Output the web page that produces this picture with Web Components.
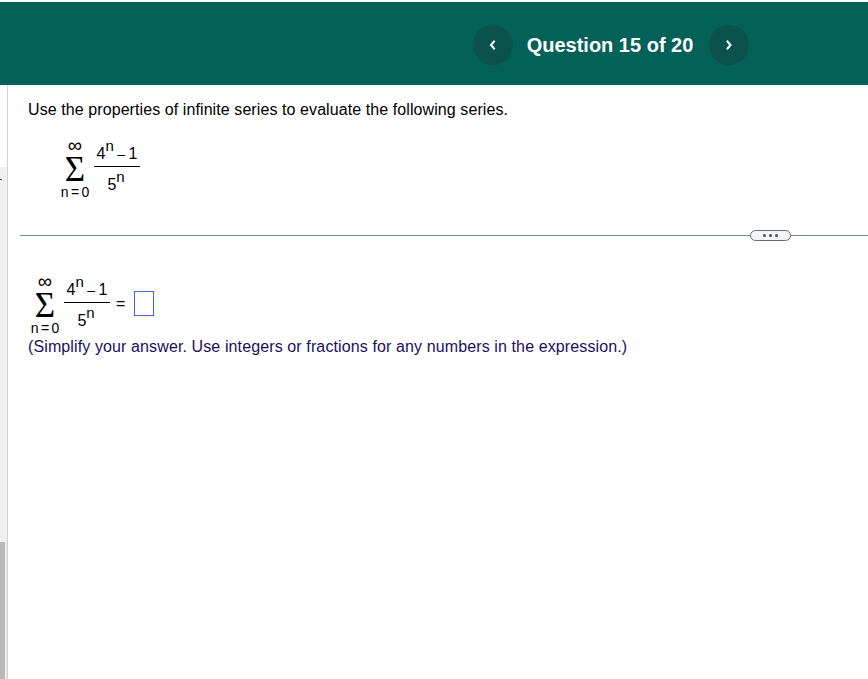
<!DOCTYPE html>
<html><head><meta charset="utf-8">
<style>
html,body{margin:0;padding:0;background:#fff;height:100%}
body{font-family:"Liberation Sans",Arial,sans-serif;color:#000;overflow:hidden}
</style></head><body>
<q-app>
  <q-header slot="header" label="Question 15 of 20"></q-header>
  <q-rail slot="rail"></q-rail>
  <q-content>
    <q-text style="--top:15px;--left:28px;letter-spacing:.085px">Use the properties of infinite series to evaluate the following series.</q-text>
    <q-sum style="--ml:52px;--mt:17px"></q-sum>
    <q-divider style="--mt:29px"></q-divider>
    <q-sum answer style="--ml:22px;--mt:32px"></q-sum>
    <q-text style="--top:0px;--left:28px;color:#1a1060;letter-spacing:.115px">(Simplify your answer. Use integers or fractions for any numbers in the expression.)</q-text>
  </q-content>
</q-app>
<script>
function def(name, html, init){
  customElements.define(name, class extends HTMLElement{
    constructor(){super();const r=this.attachShadow({mode:'open'});r.innerHTML=html;}
    connectedCallback(){ if(init) init(this); }
  });
}
def('q-app',`<style>
:host{display:grid;grid-template-columns:8px 1fr;grid-template-rows:85px 1fr;height:679px;width:868px}
.h{grid-column:1/3}
</style><div class="h"><slot name="header"></slot></div><slot name="rail"></slot><slot></slot>`);
const chev=d=>`<svg width="8" height="10" viewBox="0 0 8 10"><path d="${d}" fill="none" stroke="#fff" stroke-width="2" stroke-linecap="square"/></svg>`;
def('q-header',`<style>
:host{display:block;height:85px;box-sizing:border-box;padding-top:2px;background:#fff}
.bar{height:83px;background:#046158;display:flex;align-items:center;padding-left:473px;padding-top:3px;box-sizing:border-box}
button{all:unset;width:40px;height:40px;border-radius:50%;background:#0b524e;display:flex;align-items:center;justify-content:center}
.t{width:194px;padding-right:2px;text-align:center;color:#fff;font:bold 20px "Liberation Sans",Arial,sans-serif;white-space:nowrap}
</style><div class="bar"><button aria-label="Previous">${chev('M5 1.5 2 5l3 3.5')}</button><span class="t" id="t"></span><button aria-label="Next">${chev('M2.5 1.5 5.5 5l-3 3.5')}</button></div>`,
 el=>{el.shadowRoot.getElementById('t').textContent=el.getAttribute('label')});
def('q-rail',`<style>
:host{display:flex;flex-direction:column;width:8px;box-sizing:border-box;border-right:1px solid #d2d2da;height:594px}
.a{height:82px;background:#fff}.b{height:375px;box-sizing:border-box;padding-top:12px;background:#f0f0f0}.c{flex:1;background:#fff;display:flex}
.b i{display:block;width:2px;height:1px;background:#555}
.c i{display:block;width:5px;background:#bbb}.c b{flex:1;background:#ececf0}
</style><div class="a"></div><div class="b"><i></i></div><div class="c"><i></i><b></b></div>`);
def('q-content',`<style>:host{display:block;min-width:0}</style><slot></slot>`);
def('q-text',`<style>:host{display:block;margin-top:var(--top,0);margin-left:calc(var(--left,0px) - 8px);font-size:16px;line-height:20px;white-space:nowrap}</style><slot></slot>`);
def('q-frac',`<style>
:host{display:inline-flex;flex-direction:column;align-items:center;width:46px;font-size:16px;line-height:16px}
.n,.d{white-space:pre;text-align:center;box-sizing:border-box;width:100%}
.n{height:29px;padding-top:9px;word-spacing:-.9px}
.n span{font-size:14px}
.d{height:30px;padding-top:10px;padding-right:2px}
sup{font-size:15px;line-height:0;position:relative;top:-8px;vertical-align:baseline}
.l{width:46px;height:1px;flex:none;background:#000}
</style><div class="n">4<sup>n</sup> <span>–</span> 1</div><div class="l"></div><div class="d">5<sup>n</sup></div>`);
def('q-sigma',`<style>
:host{display:inline-flex;flex-direction:column;align-items:center;width:30px}
.i{height:16px;line-height:16px;font-size:20px;font-family:"Liberation Sans",sans-serif}
.s{height:30px;font:35px/30px "Liberation Serif",serif;margin-top:2px}
.b{height:16px;line-height:16px;font-size:14px;white-space:nowrap;margin-top:-1px;word-spacing:-1.5px}
</style><span class="i">∞</span><span class="s">Σ</span><span class="b">n = 0</span>`);
def('q-sum',`<style>
:host{display:flex;align-items:flex-start;margin-left:var(--ml);margin-top:var(--mt);height:64px}
.f{margin-left:4px}
.eq{font-size:16px;line-height:16px;margin:23px 0 0 6px}
.box{box-sizing:border-box;width:20px;height:25px;border:1.5px solid #3a6bc9;margin:18px 0 0 9px}
</style><q-sigma></q-sigma><q-frac class="f"></q-frac><span id="x" style="display:contents"></span>`,
 el=>{ if(el.hasAttribute('answer')) el.shadowRoot.getElementById('x').innerHTML='<span class="eq">=</span><span class="box"></span>'; });
def('q-divider',`<style>
:host{display:flex;align-items:center;margin-left:12px;height:11px;margin-top:var(--mt)}
.r{flex:1;height:1px;background:#7f8a96}
.r.e{flex:0 0 77px}
.p{width:41px;height:11px;box-sizing:border-box;border:1px solid #5e6b78;border-radius:6px;background:#f4f5f8;display:flex;align-items:center;justify-content:center;gap:3px}
.p i{width:3px;height:3px;border-radius:50%;background:#4a5560}
</style><div class="r"></div><div class="p"><i></i><i></i><i></i></div><div class="r e"></div>`);
</script>
</body></html>
